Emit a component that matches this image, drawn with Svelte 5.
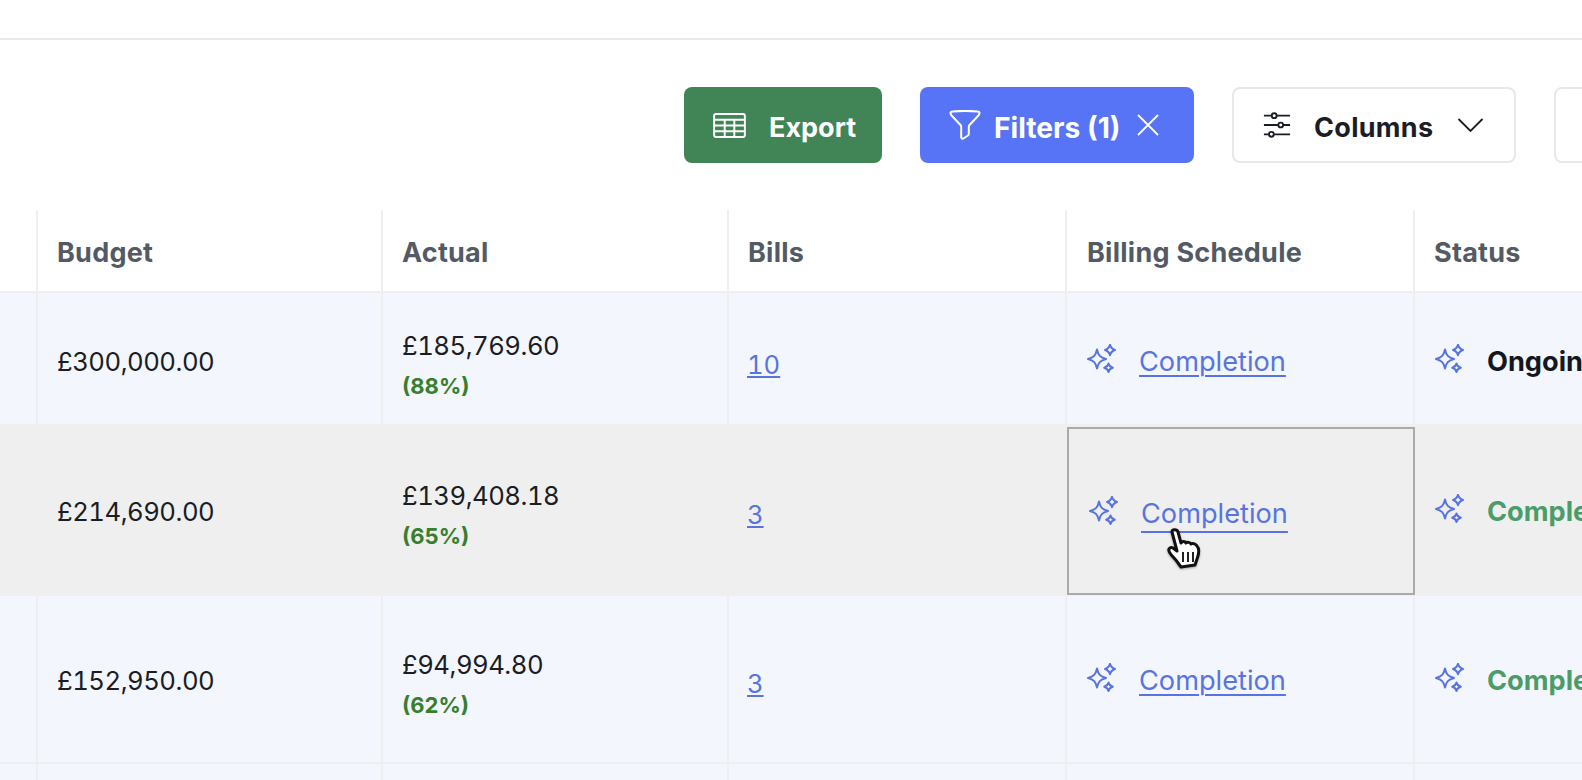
<script>
  const rows = [
    { budget: '£300,000.00', actual: '£185,769.60', pct: '(88%)', bills: '10', status: 'Ongoing', cls: 'ongoing', h: 'r1' },
    { budget: '£214,690.00', actual: '£139,408.18', pct: '(65%)', bills: '3', status: 'Completed', cls: 'done', h: 'r2', active: true },
    { budget: '£152,950.00', actual: '£94,994.80', pct: '(62%)', bills: '3', status: 'Completed', cls: 'done', h: 'r3' },
    { budget: '', actual: '', pct: '', bills: '', status: '', cls: '', h: 'r4' }
  ];
  const heads = ['Budget', 'Actual', 'Bills', 'Billing Schedule', 'Status'];
</script>

{#snippet spark()}
  <svg class="spark" viewBox="0 0 30 30" fill="none" stroke="currentColor" stroke-width="2" stroke-linejoin="round">
    <path d="M10 5.500c1.200 5.800 3.300 8 9 9.500-5.700 1.500-7.800 3.700-9 9.500-1.200-5.800-3.300-8-9-9.500 5.700-1.500 7.800-3.700 9-9.500z"/>
    <path d="M23 .8c.7 3 1.900 4.300 5 5.200-3.100.9-4.300 2.200-5 5.200-.7-3-1.900-4.300-5-5.200 3.100-.9 4.300-2.200 5-5.200z"/>
    <path d="M21.500 19.500c.6 2.500 1.600 3.500 4.300 4.300-2.700.8-3.700 1.800-4.300 4.300-.6-2.500-1.600-3.500-4.300-4.300 2.700-.8 3.700-1.800 4.300-4.300z"/>
  </svg>
{/snippet}

<div class="page">
  <div class="topbar"></div>
  <div class="toolbar">
    <button class="btn export">
      <svg class="ico-table" viewBox="0 0 34 26" fill="none" stroke="currentColor" stroke-width="2">
        <rect x="1" y="1" width="32" height="24" rx="2"/>
        <path d="M1 7h32M1 13h32M1 19h32M12 7v18M22 7v18"/>
      </svg>
      <span>Export</span>
    </button>
    <button class="btn filters">
      <svg class="ico-funnel" viewBox="0 0 32 30" fill="none" stroke="currentColor" stroke-width="2" stroke-linejoin="round">
        <path d="M1.500 3c0-1 .7-1.500 2-1.500 8-.8 17-.8 25 0 1.300 0 2 .5 2 1.500 0 1-.6 2-1.500 3L20.500 15c-.5.600-.7 1.200-.7 2v7c0 .7-.3 1.100-.9 1.500l-4.500 3c-1 .6-2.200 0-2.200-1.200V17c0-.8-.2-1.400-.7-2L3 6C2.100 5 1.500 4 1.500 3z"/>
      </svg>
      <span>Filters (1)</span>
      <svg class="ico-x" viewBox="0 0 22 22" fill="none" stroke="currentColor" stroke-width="1.800"><path d="M1 1l20 20M21 1L1 21"/></svg>
    </button>
    <button class="btn columns">
      <svg class="ico-sliders" viewBox="0 0 30 26" fill="none" stroke="currentColor" stroke-width="2">
        <path d="M1 3h8M15 3h14M1 13h15M22 13h7M1 23h5M12 23h17"/>
        <circle cx="12" cy="3" r="2.600"/><circle cx="19" cy="13" r="2.600"/><circle cx="9" cy="23" r="2.600"/>
      </svg>
      <span>Columns</span>
      <svg class="ico-chev" viewBox="0 0 26 14" fill="none" stroke="currentColor" stroke-width="1.800"><path d="M1 1l12 12L25 1"/></svg>
    </button>
    <button class="btn ghost" aria-label="More"></button>
  </div>

  <div class="table">
    <div class="row head">
      <div class="cell stub"></div>
      {#each heads as h}
        <div class="cell">{h}</div>
      {/each}
    </div>
    {#each rows as r}
      <div class="row {r.h}" class:hover={r.active}>
        <div class="cell stub"></div>
        <div class="cell money">{r.budget}</div>
        <div class="cell actual">
          {#if r.actual}
            <span class="money">{r.actual}</span>
            <span class="pct">{r.pct}</span>
          {/if}
        </div>
        <div class="cell bills">
          {#if r.bills}<a href="#bills">{r.bills}</a>{/if}
        </div>
        <div class="cell sched" class:selected={r.active}>
          {#if r.h !== 'r4'}
            {@render spark()}
            <a href="#s" class:under={r.active}>Completion</a>
          {/if}
        </div>
        <div class="cell stat">
          {#if r.status}
            {@render spark()}
            <span class={r.cls}>{r.status}</span>
          {/if}
        </div>
      </div>
    {/each}
  </div>

  <svg class="cursor" viewBox="0 0 40 42">
    <path d="M7 5c0-3 5-3 6 0l3 11c1-2 4-2 5 0 1-1 4-1 5 1 2-1 5 0 6 2 2 2 2 6 1 10l-3 9-14 2-3-4c-3-5-8-8-9-12-1-3 2-4 4-3l4 3z" fill="#fff" stroke="#111" stroke-width="3" stroke-linejoin="round"/>
    <path d="M18 25v10M23 25v10M28 25v10" stroke="#222" stroke-width="2"/>
  </svg>
</div>

<style>
  :global(body) { margin: 0; background: #fff; }
  .page {
    position: relative;
    width: 1582px;
    height: 780px;
    overflow: hidden;
    font-family: Inter, "Liberation Sans", sans-serif;
    color: #1a1d24;
    font-size: 27.200px;
  }
  .topbar { height: 38px; border-bottom: 2px solid #e8e8e9; }
  .toolbar {
    display: flex;
    gap: 38px;
    padding: 47px 0 0 684px;
    height: 76px;
    width: 1300px;
  }
  .btn {
    box-sizing: border-box;
    flex: none;
    height: 76px;
    display: flex;
    align-items: center;
    border-radius: 8px;
    border: 0;
    font: 700 27px Inter, "Liberation Sans", sans-serif;
    padding: 0;
  }
  .btn span { margin-top: 5px; }
  .export { width: 198px; background: #418556; color: #fff; padding-left: 29px; gap: 23px; }
  .filters { width: 274px; background: #5874f6; color: #fff; padding-left: 29px; gap: 13px; }
  .filters span { font-size: 28.200px; }
  .columns { width: 284px; background: #fff; color: #1a1d24; border: 2px solid #e8e8e9; padding-left: 29px; gap: 23px; }
  .columns span { letter-spacing: .3px; }
  .ghost { width: 200px; background: #fff; border: 2px solid #e8e8e9; }
  .ico-table { width: 33px; height: 25px; }
  .ico-funnel { width: 32px; height: 30px; }
  .ico-x { width: 22px; height: 22px; margin-left: 4px; }
  .ico-sliders { width: 28px; height: 26px; }
  .ico-chev { width: 27px; height: 14px; margin-left: 1px; }

  .table { margin-top: 47px; width: 1700px; }
  .row {
    display: grid;
    grid-template-columns: 38px 345px 346px 338px 348px 1fr;
    background: #f3f6fd;
  }
  .head { height: 83px; background: #fff; color: #545a63; font-weight: 700; font-size: 27px; letter-spacing: .25px; border-bottom: 2px solid #efeff1; box-sizing: border-box; }
  .head .cell { padding-top: 4px; }
  .head .cell:nth-child(5) { padding-left: 20px; }
  .r1 { height: 131px; }
  .r1 .cell { padding-top: 5px; }
  .r2 { height: 170px; background: #efefef; }
  .r2 .cell { padding-top: 4px; }
  .r3 { height: 168px; border-top: 2px solid #efeff1; box-sizing: border-box; }
  .r3 .cell { padding-top: 2px; }
  .r4 { height: 60px; border-top: 2px solid #efeff1; box-sizing: border-box; }
  .cell {
    box-sizing: border-box;
    border-right: 2px solid #efeff1;
    padding-left: 19px;
    display: flex;
    align-items: center;
    min-width: 0;
    white-space: nowrap;
  }
  .stub { padding: 0; }
  .row > .cell:last-child { border-right: 0; }
  .money { font-size: 25.700px; font-variant-numeric: tabular-nums; letter-spacing: -.5px; }
  .row .actual { flex-direction: column; align-items: flex-start; justify-content: center; gap: 12px; padding-top: 11px; }
  .r3 .actual { padding-top: 8px; }
  .pct { color: #377e2e; font-size: 22px; font-weight: 700; }
  .bills a, .sched a { color: #5874e0; }
  .bills a { font-variant-numeric: tabular-nums; font-size: 25.600px; }
  .row .bills { padding-top: 11px; padding-left: 18px; }
  .r3 .bills { padding-top: 8px; }
  .sched { gap: 22px; color: #5874e0; padding-left: 20px; }
  .sched a { text-underline-offset: 4px; text-decoration-thickness: 1.500px; }
  .sched a.under { text-decoration-thickness: 2px; text-underline-offset: 8px; }
  .stat { gap: 22px; color: #5874e0; padding-left: 20px; }
  .selected { position: relative; border: 2px solid #aaa; margin: 3px 0 -1px; }
  .spark { width: 30px; height: 30px; flex: none; margin-top: -4px; }
  .ongoing { color: #14171f; font-weight: 700; }
  .done { color: #4a9d68; font-weight: 700; }
  .cursor { position: absolute; left: 1164px; top: 527px; width: 42px; height: 42px; filter: drop-shadow(0 1px 1px rgba(0,0,0,.3)); }
</style>
